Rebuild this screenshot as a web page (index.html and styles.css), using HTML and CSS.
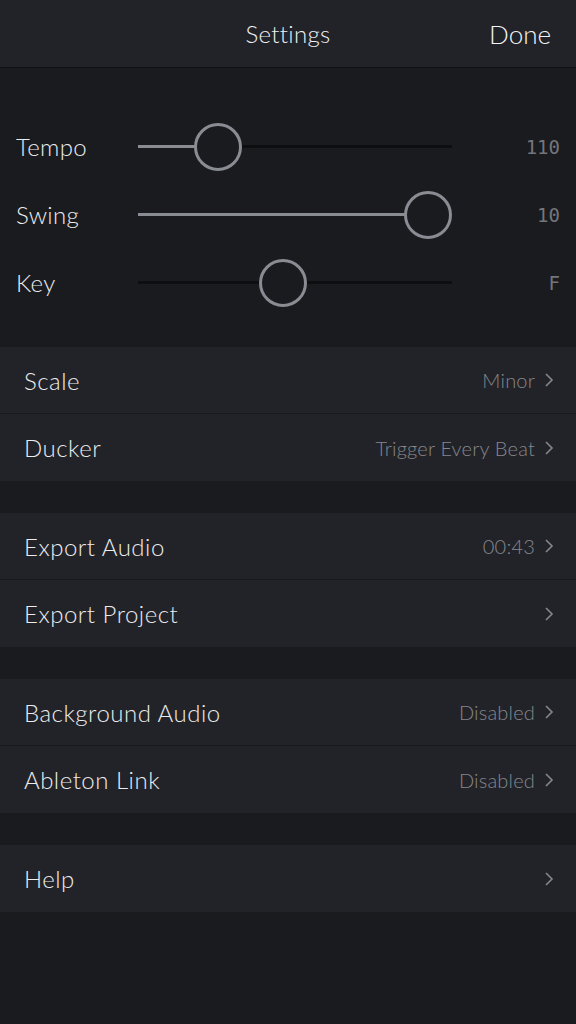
FILE: index.html
```html
<!DOCTYPE html>
<html>
<head>
<meta charset="utf-8">
<link rel="stylesheet" href="styles.css">
</head>
<body>
<div class="app">
  <header class="nav">
    <div class="nav-spacer"></div>
    <div class="nav-title">Settings</div>
    <div class="nav-done">Done</div>
  </header>

  <section class="sliders">
    <div class="slider-row">
      <div class="slider-label">Tempo</div>
      <div class="slider">
        <div class="track"></div>
        <div class="fill" style="width:80px"></div>
        <div class="thumb" style="left:56px"></div>
      </div>
      <div class="slider-value">110</div>
    </div>
    <div class="slider-row">
      <div class="slider-label">Swing</div>
      <div class="slider">
        <div class="track"></div>
        <div class="fill" style="width:290px"></div>
        <div class="thumb" style="left:266px"></div>
      </div>
      <div class="slider-value">10</div>
    </div>
    <div class="slider-row">
      <div class="slider-label">Key</div>
      <div class="slider">
        <div class="track"></div>
        <div class="thumb" style="left:121px"></div>
      </div>
      <div class="slider-value">F</div>
    </div>
  </section>

  <section class="group">
    <div class="row"><span class="row-label">Scale</span><span class="row-value">Minor</span><svg class="chev" viewBox="0 0 10 16"><path d="M2 2 L8 8 L2 14"/></svg></div>
    <div class="row"><span class="row-label">Ducker</span><span class="row-value">Trigger Every Beat</span><svg class="chev" viewBox="0 0 10 16"><path d="M2 2 L8 8 L2 14"/></svg></div>
  </section>

  <section class="group">
    <div class="row"><span class="row-label">Export Audio</span><span class="row-value">00:43</span><svg class="chev" viewBox="0 0 10 16"><path d="M2 2 L8 8 L2 14"/></svg></div>
    <div class="row"><span class="row-label">Export Project</span><span class="row-value"></span><svg class="chev" viewBox="0 0 10 16"><path d="M2 2 L8 8 L2 14"/></svg></div>
  </section>

  <section class="group">
    <div class="row"><span class="row-label">Background Audio</span><span class="row-value">Disabled</span><svg class="chev" viewBox="0 0 10 16"><path d="M2 2 L8 8 L2 14"/></svg></div>
    <div class="row"><span class="row-label">Ableton Link</span><span class="row-value">Disabled</span><svg class="chev" viewBox="0 0 10 16"><path d="M2 2 L8 8 L2 14"/></svg></div>
  </section>

  <section class="group">
    <div class="row"><span class="row-label">Help</span><span class="row-value"></span><svg class="chev" viewBox="0 0 10 16"><path d="M2 2 L8 8 L2 14"/></svg></div>
  </section>
</div>
</body>
</html>
```

FILE: styles.css
```css
* { box-sizing: border-box; }
html, body {
  margin: 0;
  padding: 0;
  background: #1a1b1f;
  font-family: Lato, "Open Sans", sans-serif;
  font-weight: 300;
  color: #ececee;
}
.app {
  width: 576px;
  min-height: 1024px;
  background: #1a1b1f;
}
.nav {
  height: 68px;
  background: #222328;
  border-bottom: 1px solid #0f1012;
  display: grid;
  grid-template-columns: 1fr auto 1fr;
  align-items: center;
  padding: 0 25px 0 25px;
}
.nav-title {
  font-size: 24px;
  color: #f0f0f2;
  letter-spacing: 0.3px;
}
.nav-done {
  justify-self: end;
  font-size: 26px;
  color: #f4f4f6;
}
.sliders {
  padding: 45px 16px 30px 16px;
  display: flex;
  flex-direction: column;
}
.slider-row {
  height: 68px;
  display: flex;
  align-items: center;
}
.slider-label {
  width: 122px;
  font-size: 24px;
  letter-spacing: 0.3px;
  color: #ececee;
  padding-bottom: 2px;
}
.slider {
  position: relative;
  width: 314px;
  height: 50px;
}
.track {
  position: absolute;
  left: 0;
  right: 0;
  top: 23px;
  height: 3px;
  background: #0d0e10;
}
.fill {
  position: absolute;
  left: 0;
  top: 23px;
  height: 3px;
  background: #8a8c93;
}
.thumb {
  position: absolute;
  top: 1px;
  width: 48px;
  height: 48px;
  border-radius: 50%;
  border: 3px solid #8a8c93;
  background: #1a1b1f;
}
.slider-value {
  flex: 1;
  text-align: right;
  font-family: "DejaVu Sans Mono", monospace;
  font-weight: 400;
  font-size: 19px;
  color: #74767c;
}
.group {
  margin-top: 32px;
  background: #222328;
}
.sliders + .group { margin-top: 0; }
.row {
  height: 67px;
  display: flex;
  align-items: center;
  padding: 0 22px 0 24px;
  border-bottom: 1px solid #18191c;
}
.row:last-child { border-bottom: none; }
.row-label {
  flex: 1;
  font-size: 24px;
  color: #ececee;
  letter-spacing: 0.5px;
}
.row-value {
  font-size: 20px;
  color: #85878d;
  letter-spacing: 0.2px;
  margin-right: 9px;
}
.chev {
  width: 10px;
  height: 16px;
  fill: none;
  stroke: #85878d;
  stroke-width: 1.6;
}
```
